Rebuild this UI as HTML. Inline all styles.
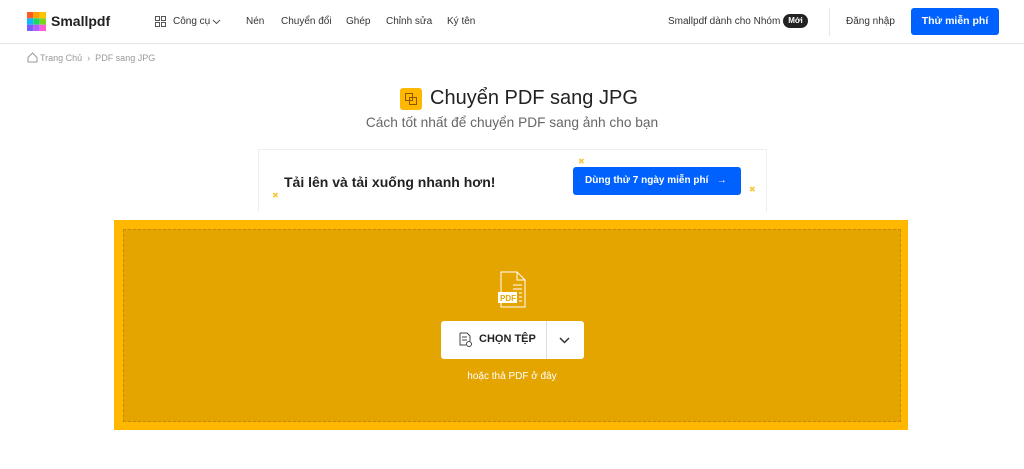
<!DOCTYPE html><html><head><meta charset="utf-8"><style>
*{margin:0;padding:0;box-sizing:border-box}
body{width:1024px;height:469px;background:#fff;font-family:"Liberation Sans",sans-serif;position:relative;overflow:hidden;color:#222}
.a{position:absolute}
.nav{font-size:10px;color:#333;top:16px}
</style></head><body>
<div class="a" style="left:0;top:43px;width:1024px;height:1px;background:#e6e6e6"></div>
<svg class="a" style="left:27px;top:12px" width="19" height="19"><rect x="0" y="0" width="6.3" height="6.3" fill="#ff5a1f"/><rect x="6.3" y="0" width="6.4" height="6.3" fill="#ffa000"/><rect x="12.7" y="0" width="6.3" height="6.3" fill="#ffc400"/><rect x="0" y="6.3" width="6.3" height="6.4" fill="#10b4ff"/><rect x="6.3" y="6.3" width="6.4" height="6.4" fill="#1ed760"/><rect x="12.7" y="6.3" width="6.3" height="6.4" fill="#7ed321"/><rect x="0" y="12.7" width="6.3" height="6.3" fill="#7b5cff"/><rect x="6.3" y="12.7" width="6.4" height="6.3" fill="#b55cff"/><rect x="12.7" y="12.7" width="6.3" height="6.3" fill="#ff5cd6"/></svg>
<div class="a" style="left:51px;top:13px;font-size:14px;font-weight:bold;color:#222">Smallpdf</div>
<svg class="a" style="left:155px;top:16px" width="11" height="11" fill="none" stroke="#555" stroke-width="1"><rect x=".5" y=".5" width="4" height="4"/><rect x="6.5" y=".5" width="4" height="4"/><rect x=".5" y="6.5" width="4" height="4"/><rect x="6.5" y="6.5" width="4" height="4"/></svg>
<div class="a nav" style="left:173px">Công cụ</div>
<svg class="a" style="left:212px;top:19px" width="9" height="6" fill="none" stroke="#555"><path d="M1 1l3.5 3.5L8 1"/></svg>
<div class="a nav" style="left:246px">Nén</div>
<div class="a nav" style="left:281px">Chuyển đổi</div>
<div class="a nav" style="left:346px">Ghép</div>
<div class="a nav" style="left:386px">Chỉnh sửa</div>
<div class="a nav" style="left:447px">Ký tên</div>
<div class="a nav" style="left:668px">Smallpdf dành cho Nhóm</div>
<div class="a" style="left:783px;top:14px;width:25px;height:14px;border-radius:7px;background:#222;color:#fff;font-size:8px;font-weight:bold;text-align:center;line-height:14px">Mới</div>
<div class="a" style="left:829px;top:8px;width:1px;height:28px;background:#e6e6e6"></div>
<div class="a nav" style="left:846px">Đăng nhập</div>
<div class="a" style="left:911px;top:8px;width:88px;height:27px;border-radius:3px;background:#0061fe;color:#fff;font-size:10.5px;font-weight:bold;text-align:center;line-height:27px">Thử miễn phí</div>
<svg class="a" style="left:27px;top:52px" width="11" height="11" fill="none" stroke="#999"><path d="M1 5.5L5.5 1 10 5.5V10H1z"/></svg>
<div class="a" style="left:40px;top:53px;font-size:9px;color:#999">Trang Chủ &nbsp;›&nbsp; PDF sang JPG</div>
<div class="a" style="left:400px;top:88px;width:22px;height:22px;border-radius:3px;background:#ffb700"></div>
<svg class="a" style="left:405px;top:93px" width="12" height="12" fill="none" stroke="#8a5a00" stroke-width="1"><rect x=".5" y=".5" width="7" height="7"/><rect x="4.5" y="4.5" width="7" height="7"/></svg>
<div class="a" style="left:430px;top:87px;font-size:20px;color:#222">Chuyển PDF sang JPG</div>
<div class="a" style="left:0;width:1024px;top:115px;font-size:13.7px;color:#666;text-align:center">Cách tốt nhất để chuyển PDF sang ảnh cho bạn</div>
<div class="a" style="left:258px;top:149px;width:509px;height:63px;border:1px solid #eee;border-bottom:none"></div>
<div class="a" style="left:284px;top:174px;font-size:14px;font-weight:bold;color:#222">Tải lên và tải xuống nhanh hơn!</div>
<div class="a" style="left:573px;top:167px;width:168px;height:28px;border-radius:3px;background:#0061fe;color:#fff;font-size:10px;font-weight:bold;line-height:28px;padding-left:12px">Dùng thử 7 ngày miễn phí &nbsp;&nbsp;→</div>
<div class="a" style="left:272px;top:191px;font-size:8px;color:#f5c842">✖</div>
<div class="a" style="left:578px;top:157px;font-size:8px;color:#f5c842">✖</div>
<div class="a" style="left:749px;top:185px;font-size:8px;color:#f5c842">✖</div>
<div class="a" style="left:114px;top:220px;width:794px;height:210px;background:#ffb700"></div>
<div class="a" style="left:123px;top:229px;width:778px;height:193px;background:#e5a500;border:1px dashed #c68a00"></div>
<svg class="a" style="left:498px;top:271px" width="30" height="38" fill="none" stroke="#fff" stroke-width="1"><path d="M3 1h16l8 8v27H3z M19 1v8h8 M15 14h9 M15 18h9 M21 22h3 M21 26h3 M21 30h3"/><rect x="0" y="21" width="19" height="11" fill="#fff" stroke="none"/><text x="2" y="30" font-size="8" font-weight="bold" fill="#e5a500" stroke="none" font-family="Liberation Sans">PDF</text></svg>
<div class="a" style="left:441px;top:321px;width:143px;height:38px;border-radius:3px;background:#fff"></div>
<div class="a" style="left:546px;top:321px;width:1px;height:38px;background:#ddd"></div>
<svg class="a" style="left:459px;top:332px" width="13" height="15" fill="none" stroke="#444"><path d="M1 1h7l3 3v5 M1 1v12h6 M3 5h5 M3 8h5"/><circle cx="10" cy="12" r="2.5"/></svg>
<div class="a" style="left:479px;top:333px;font-size:11px;font-weight:bold;color:#222">CHỌN TỆP</div>
<svg class="a" style="left:559px;top:337px" width="11" height="7" fill="none" stroke="#333" stroke-width="1.5"><path d="M1 1l4.5 4.5L10 1"/></svg>
<div class="a" style="left:0;width:1024px;top:371px;font-size:10px;color:#fff;text-align:center">hoặc thả PDF ở đây</div>
</body></html>
